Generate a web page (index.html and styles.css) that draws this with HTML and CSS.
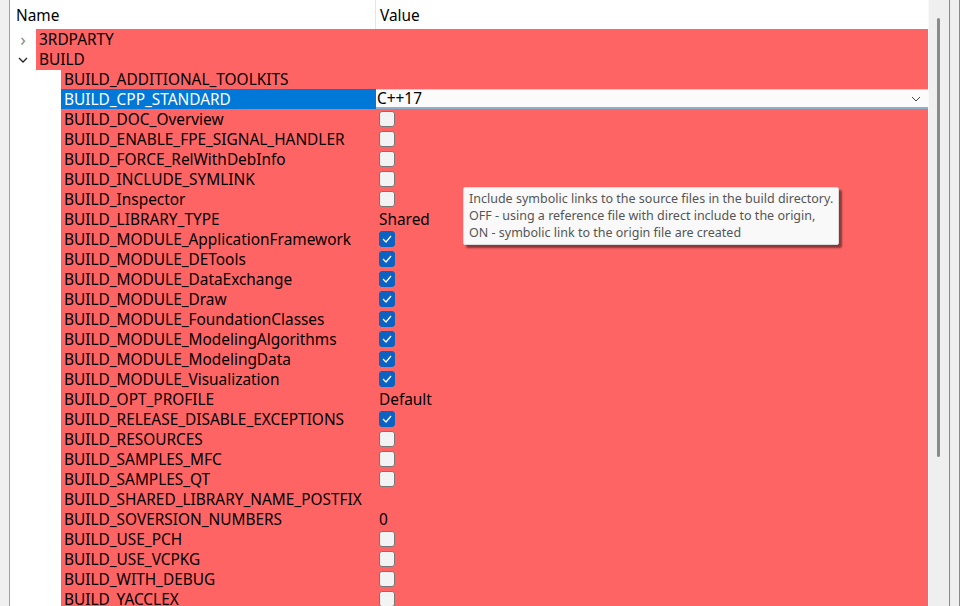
FILE: index.html
```html
<!DOCTYPE html>
<html lang="en">
<head>
  <meta charset="utf-8">
  <title>CMake options</title>
  <link rel="stylesheet" href="styles.css">
</head>
<body>
  <div class="window">
    <div class="gutter"></div>

    <div class="tree">
      <div class="head">
        <div class="col-name">Name</div>
        <div class="col-value">Value</div>
      </div>

      <!-- top level groups -->
      <div class="row">
        <div class="name lvl0"><span class="twisty closed">&#8250;</span><span class="label">3RDPARTY</span></div>
        <div class="value"></div>
      </div>
      <div class="row">
        <div class="name lvl0"><span class="twisty open"><svg width="10" height="6" viewBox="0 0 10 6"><path d="M1 1 L5 5 L9 1" fill="none" stroke="#222" stroke-width="1.3"/></svg></span><span class="label">BUILD</span></div>
        <div class="value"></div>
      </div>

      <!-- BUILD children -->
      <div class="row"><div class="name lvl1"><span class="label">BUILD_ADDITIONAL_TOOLKITS</span></div><div class="value"></div></div>
      <div class="row selected">
        <div class="name lvl1"><span class="label">BUILD_CPP_STANDARD</span></div>
        <div class="value">
          <div class="combo">
            <span>C++17</span>
            <svg width="10" height="6" viewBox="0 0 10 6"><path d="M1 1 L5 5 L9 1" fill="none" stroke="#444" stroke-width="1"/></svg>
          </div>
        </div>
      </div>
      <div class="row"><div class="name lvl1"><span class="label">BUILD_DOC_Overview</span></div><div class="value"><span class="cb"></span></div></div>
      <div class="row"><div class="name lvl1"><span class="label">BUILD_ENABLE_FPE_SIGNAL_HANDLER</span></div><div class="value"><span class="cb"></span></div></div>
      <div class="row"><div class="name lvl1"><span class="label">BUILD_FORCE_RelWithDebInfo</span></div><div class="value"><span class="cb"></span></div></div>
      <div class="row"><div class="name lvl1"><span class="label">BUILD_INCLUDE_SYMLINK</span></div><div class="value"><span class="cb"></span></div></div>
      <div class="row"><div class="name lvl1"><span class="label">BUILD_Inspector</span></div><div class="value"><span class="cb"></span></div></div>
      <div class="row"><div class="name lvl1"><span class="label">BUILD_LIBRARY_TYPE</span></div><div class="value">Shared</div></div>
      <div class="row"><div class="name lvl1"><span class="label">BUILD_MODULE_ApplicationFramework</span></div><div class="value"><span class="cb on"><svg width="10" height="8" viewBox="0 0 10 8"><path d="M1 4 L4 7 L9 1" fill="none" stroke="#fff" stroke-width="1.2"/></svg></span></div></div>
      <div class="row"><div class="name lvl1"><span class="label">BUILD_MODULE_DETools</span></div><div class="value"><span class="cb on"><svg width="10" height="8" viewBox="0 0 10 8"><path d="M1 4 L4 7 L9 1" fill="none" stroke="#fff" stroke-width="1.2"/></svg></span></div></div>
      <div class="row"><div class="name lvl1"><span class="label">BUILD_MODULE_DataExchange</span></div><div class="value"><span class="cb on"><svg width="10" height="8" viewBox="0 0 10 8"><path d="M1 4 L4 7 L9 1" fill="none" stroke="#fff" stroke-width="1.2"/></svg></span></div></div>
      <div class="row"><div class="name lvl1"><span class="label">BUILD_MODULE_Draw</span></div><div class="value"><span class="cb on"><svg width="10" height="8" viewBox="0 0 10 8"><path d="M1 4 L4 7 L9 1" fill="none" stroke="#fff" stroke-width="1.2"/></svg></span></div></div>
      <div class="row"><div class="name lvl1"><span class="label">BUILD_MODULE_FoundationClasses</span></div><div class="value"><span class="cb on"><svg width="10" height="8" viewBox="0 0 10 8"><path d="M1 4 L4 7 L9 1" fill="none" stroke="#fff" stroke-width="1.2"/></svg></span></div></div>
      <div class="row"><div class="name lvl1"><span class="label">BUILD_MODULE_ModelingAlgorithms</span></div><div class="value"><span class="cb on"><svg width="10" height="8" viewBox="0 0 10 8"><path d="M1 4 L4 7 L9 1" fill="none" stroke="#fff" stroke-width="1.2"/></svg></span></div></div>
      <div class="row"><div class="name lvl1"><span class="label">BUILD_MODULE_ModelingData</span></div><div class="value"><span class="cb on"><svg width="10" height="8" viewBox="0 0 10 8"><path d="M1 4 L4 7 L9 1" fill="none" stroke="#fff" stroke-width="1.2"/></svg></span></div></div>
      <div class="row"><div class="name lvl1"><span class="label">BUILD_MODULE_Visualization</span></div><div class="value"><span class="cb on"><svg width="10" height="8" viewBox="0 0 10 8"><path d="M1 4 L4 7 L9 1" fill="none" stroke="#fff" stroke-width="1.2"/></svg></span></div></div>
      <div class="row"><div class="name lvl1"><span class="label">BUILD_OPT_PROFILE</span></div><div class="value">Default</div></div>
      <div class="row"><div class="name lvl1"><span class="label">BUILD_RELEASE_DISABLE_EXCEPTIONS</span></div><div class="value"><span class="cb on"><svg width="10" height="8" viewBox="0 0 10 8"><path d="M1 4 L4 7 L9 1" fill="none" stroke="#fff" stroke-width="1.2"/></svg></span></div></div>
      <div class="row"><div class="name lvl1"><span class="label">BUILD_RESOURCES</span></div><div class="value"><span class="cb"></span></div></div>
      <div class="row"><div class="name lvl1"><span class="label">BUILD_SAMPLES_MFC</span></div><div class="value"><span class="cb"></span></div></div>
      <div class="row"><div class="name lvl1"><span class="label">BUILD_SAMPLES_QT</span></div><div class="value"><span class="cb"></span></div></div>
      <div class="row"><div class="name lvl1"><span class="label">BUILD_SHARED_LIBRARY_NAME_POSTFIX</span></div><div class="value"></div></div>
      <div class="row"><div class="name lvl1"><span class="label">BUILD_SOVERSION_NUMBERS</span></div><div class="value">0</div></div>
      <div class="row"><div class="name lvl1"><span class="label">BUILD_USE_PCH</span></div><div class="value"><span class="cb"></span></div></div>
      <div class="row"><div class="name lvl1"><span class="label">BUILD_USE_VCPKG</span></div><div class="value"><span class="cb"></span></div></div>
      <div class="row"><div class="name lvl1"><span class="label">BUILD_WITH_DEBUG</span></div><div class="value"><span class="cb"></span></div></div>
      <div class="row"><div class="name lvl1"><span class="label">BUILD_YACCLEX</span></div><div class="value"><span class="cb"></span></div></div>

      <!-- hover tooltip -->
      <div class="tooltip">
        Include symbolic links to the source files in the build directory.<br>
        OFF - using a reference file with direct include to the origin,<br>
        ON - symbolic link to the origin file are created
      </div>
    </div>

    <div class="scrollbar"><div class="thumb"></div></div>
    <div class="edge"></div>
  </div>
</body>
</html>
```

FILE: styles.css
```css
html, body {
  margin: 0;
  padding: 0;
  overflow: hidden;
}
body {
  font-family: "Noto Sans", "Liberation Sans", sans-serif;
  font-size: 15.4px;
  color: #000;
  background: #fff;
}
.window {
  display: flex;
  height: 606px;
}
.gutter {
  width: 9px;
  background: #f0f0f0;
  border-right: 1px solid #a0a0a0;
}
.tree {
  position: relative;
  width: 918px;
  overflow: hidden;
  background: #fff;
}
.head {
  display: grid;
  grid-template-columns: 366px 1fr;
  height: 29px;
  line-height: 31px;
}
.col-name {
  padding-left: 6px;
  border-right: 1px solid #e5e5e5;
}
.col-value {
  padding-left: 4px;
}
.row {
  display: grid;
  grid-template-columns: 366px 1fr;
  height: 20px;
  line-height: 21px;
  white-space: nowrap;
}
.name {
  display: flex;
}
.name.lvl0 {
  padding-left: 0;
}
.name.lvl1 {
  padding-left: 51px;
}
.twisty {
  width: 26px;
  text-align: center;
  color: #8a8a8a;
  font-size: 18px;
  line-height: 20px;
}
.twisty.open {
  display: flex;
  align-items: center;
  justify-content: center;
}
.label {
  flex: 1;
  background: #ff6464;
  padding-left: 3px;
  overflow: hidden;
}
.value {
  background: #ff6464;
  padding-left: 3px;
}
.row.selected .label {
  background: #0078d7;
  color: #fff;
}
.row.selected .value {
  padding-left: 0;
}
.combo {
  display: flex;
  align-items: center;
  justify-content: space-between;
  box-sizing: border-box;
  height: 20px;
  padding: 0 7px 0 1px;
  background: #fbfbfb;
  border-top: 1px solid #d6d6d6;
  border-bottom: 2px solid #8fb0cc;
}
.cb {
  display: inline-flex;
  align-items: center;
  justify-content: center;
  box-sizing: border-box;
  width: 16px;
  height: 16px;
  margin-top: 2px;
  vertical-align: top;
  background: #f3f3f3;
  border: 1px solid #777;
  border-radius: 3px;
}
.cb.on {
  background: #0a62c2;
  border-color: #0a62c2;
}
.tooltip {
  position: absolute;
  left: 453px;
  top: 187px;
  width: 364px;
  padding: 2px 5px 3px 5px;
  font-size: 12.5px;
  line-height: 17px;
  color: #555;
  background: #f9f9f9;
  border: 1px solid #dcdcdc;
  border-radius: 2px;
  box-shadow: 3px 3px 2px rgba(0, 0, 0, 0.45);
  white-space: nowrap;
}
.scrollbar {
  position: relative;
  width: 20px;
  background: #efefef;
  border-left: 1px solid #f8f8f8;
  border-right: 1px solid #8a8a8a;
}
.thumb {
  position: absolute;
  left: 8px;
  top: 18px;
  width: 3px;
  height: 439px;
  background: #8a8a8a;
  border-radius: 2px;
}
.edge {
  width: 9px;
  background: #efefef;
  border-right: 1px solid #8a8a8a;
}
```
